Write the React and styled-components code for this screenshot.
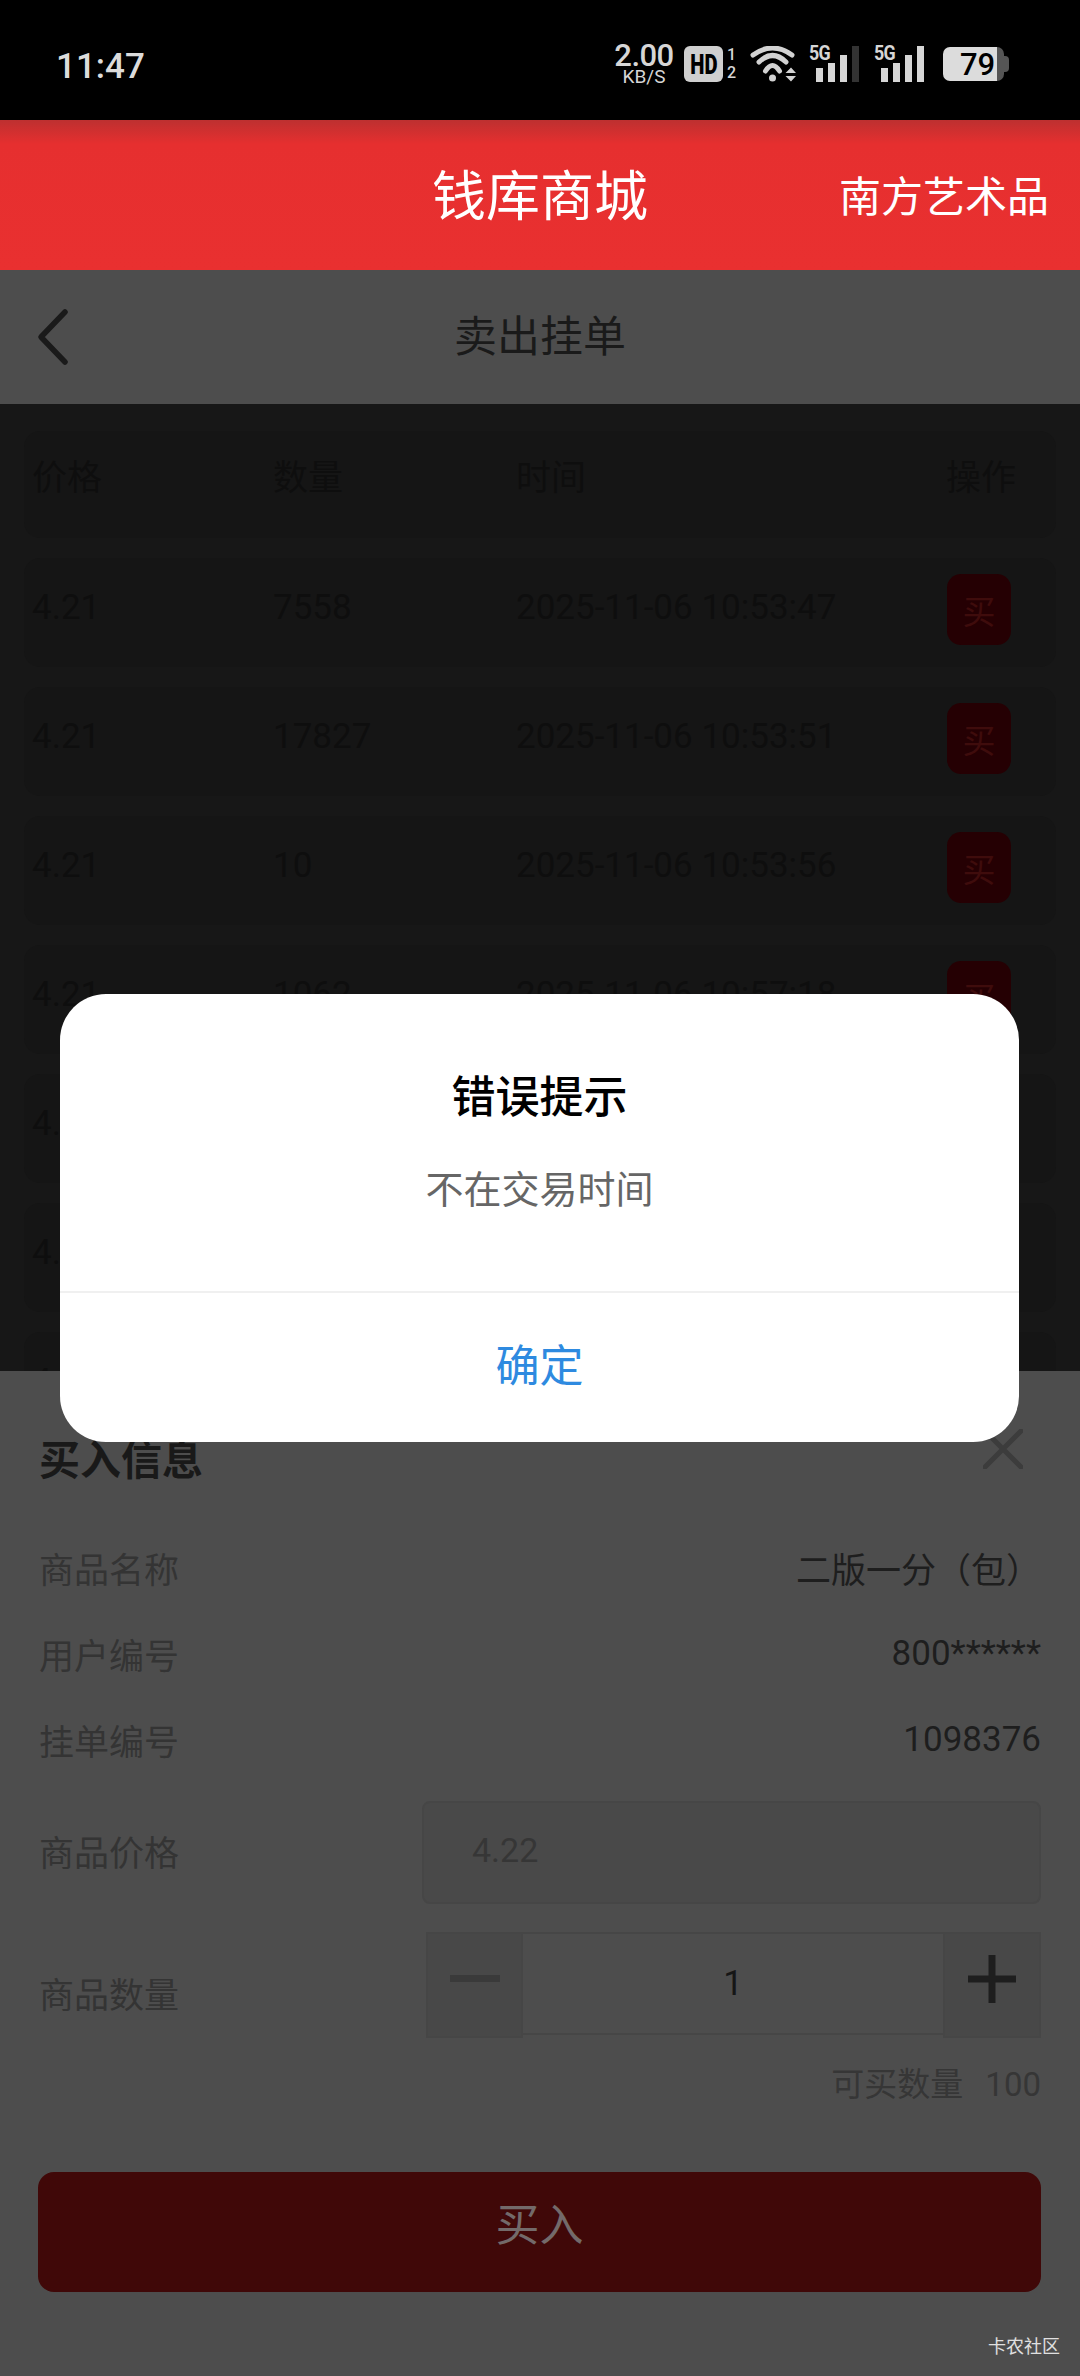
import React from "react";
import styled, { createGlobalStyle } from "styled-components";

const orders = [
  { price: "4.21", count: "7558", time: "2025-11-06 10:53:47" },
  { price: "4.21", count: "17827", time: "2025-11-06 10:53:51" },
  { price: "4.21", count: "10", time: "2025-11-06 10:53:56" },
  { price: "4.21", count: "1062", time: "2025-11-06 10:57:18" },
  { price: "4.21", count: "500", time: "2025-11-06 10:58:02" },
  { price: "4.21", count: "200", time: "2025-11-06 10:58:40" },
  { price: "4.21", count: "300", time: "2025-11-06 10:59:12" },
];

const infos = [
  { label: "商品名称", value: "二版一分（包）" },
  { label: "用户编号", value: "800******" },
  { label: "挂单编号", value: "1098376" },
];

const Signal = ({ last }) => (
  <SignalBox>
    <SignalLabel>5G</SignalLabel>
    <Bar $h={14} />
    <Bar $h={19} />
    <Bar $h={27} />
    <Bar $h={36} $dim={last} />
  </SignalBox>
);

const App = () => {
  return (
    <Page>
      <GlobalStyle />
      <StatusBar>
        <Clock>11:47</Clock>
        <StatusIcons>
          <NetSpeed>
            <b>2.00</b>
            <span>KB/S</span>
          </NetSpeed>
          <HdBadge>
            <span>HD</span>
          </HdBadge>
          <SimNumbers>
            <span>1</span>
            <span>2</span>
          </SimNumbers>
          <WifiIcon width="46" height="36" viewBox="0 0 46 36" fill="none">
            <path d="M3 9Q22.500-5 42 9" stroke="#d2d2d2" strokeWidth="5" strokeLinecap="round" />
            <path d="M9 16Q22.500 3 36 16" stroke="#d2d2d2" strokeWidth="5" strokeLinecap="round" />
            <path d="M15.500 25Q22.500 14 29.500 25" stroke="#d2d2d2" strokeWidth="5" strokeLinecap="round" />
            <circle cx="22.500" cy="32" r="3.500" fill="#d2d2d2" />
            <path d="M35.500 27L41 21.500L46 27ZM35.500 30L41 35.500L46 30Z" fill="#d2d2d2" />
          </WifiIcon>
          <Signal last />
          <Signal />
          <Battery>79</Battery>
        </StatusIcons>
      </StatusBar>

      <AppHeader>
        <span />
        <AppTitle>钱库商城</AppTitle>
        <ShopName>南方艺术品</ShopName>
      </AppHeader>

      <SubHeader>
        <BackIcon width="36" height="60" viewBox="0 0 36 60" fill="none">
          <path d="M31 5L7 30L31 55" stroke="#1a1a1a" strokeWidth="5.500" strokeLinecap="round" strokeLinejoin="round" />
        </BackIcon>
        <SubTitle>卖出挂单</SubTitle>
      </SubHeader>

      <OrderList>
        <HeadRow>
          <Cell>价格</Cell>
          <Cell>数量</Cell>
          <Cell>时间</Cell>
          <Cell>操作</Cell>
        </HeadRow>
        {orders.map((order) => (
          <OrderRow key={order.time}>
            <Cell>{order.price}</Cell>
            <Cell>{order.count}</Cell>
            <Cell>{order.time}</Cell>
            <SmallBuy>买</SmallBuy>
          </OrderRow>
        ))}
      </OrderList>

      <Sheet>
        <SheetHead>
          <SheetTitle>买入信息</SheetTitle>
          <CloseIcon width="40" height="40" viewBox="0 0 40 40" fill="none">
            <path d="M2 38L38 2M2 2L38 38" stroke="#3c3c3c" strokeWidth="5" strokeLinecap="round" />
          </CloseIcon>
        </SheetHead>

        <InfoList>
          {infos.map((info) => (
            <InfoRow key={info.label}>
              <Label>{info.label}</Label>
              <Value>{info.value}</Value>
            </InfoRow>
          ))}
        </InfoList>

        <PriceRow>
          <Label>商品价格</Label>
          <PriceInput>4.22</PriceInput>
        </PriceRow>

        <CountRow>
          <CountLabel>商品数量</CountLabel>
          <Stepper>
            <StepButton>
              <svg width="50" height="8" viewBox="0 0 50 8">
                <rect width="50" height="7" fill="#3a3a3a" />
              </svg>
            </StepButton>
            <StepValue>1</StepValue>
            <StepButton>
              <svg width="50" height="50" viewBox="0 0 50 50">
                <path d="M25 1V49M1 25H49" stroke="#1e1e1e" strokeWidth="7" />
              </svg>
            </StepButton>
          </Stepper>
        </CountRow>

        <Available>
          <span>可买数量</span>
          <span>100</span>
        </Available>

        <BuyButton>买入</BuyButton>
      </Sheet>

      <Dialog>
        <DialogBody>
          <DialogTitle>错误提示</DialogTitle>
          <DialogText>不在交易时间</DialogText>
        </DialogBody>
        <DialogAction>确定</DialogAction>
      </Dialog>

      <Watermark>卡农社区</Watermark>
    </Page>
  );
};

const GlobalStyle = createGlobalStyle`
  html, body {
    margin: 0;
    padding: 0;
    background: #000;
  }
  * {
    box-sizing: border-box;
  }
`;

const Page = styled.div`
  position: relative;
  display: flex;
  flex-direction: column;
  width: 1080px;
  height: 2376px;
  overflow: hidden;
  background: #171717;
  font-family: Roboto, "Noto Sans CJK SC", sans-serif;
`;

const StatusBar = styled.div`
  display: flex;
  align-items: center;
  justify-content: space-between;
  flex: none;
  height: 120px;
  padding: 16px 76px 8px 56px;
  background: #000;
  color: #d6d6d6;
`;

const Clock = styled.div`
  margin-top: 4px;
  font-size: 35px;
  font-weight: 500;
  color: #dcdcdc;
`;

const StatusIcons = styled.div`
  display: flex;
  align-items: center;
`;

const NetSpeed = styled.div`
  display: flex;
  flex-direction: column;
  align-items: center;
  width: 58px;
  font-size: 19px;
  line-height: 16px;

  b {
    font-size: 31px;
    font-weight: 500;
    line-height: 26px;
    letter-spacing: -0.5px;
  }
`;

const HdBadge = styled.div`
  display: flex;
  align-items: center;
  justify-content: center;
  width: 39px;
  height: 36px;
  margin-left: 11px;
  border-radius: 6px;
  background: #cfcfcf;
  color: #000;
  font-size: 28px;
  font-weight: 900;

  span {
    transform: scaleX(0.72);
  }
`;

const SimNumbers = styled.div`
  display: flex;
  flex-direction: column;
  align-items: center;
  width: 9px;
  margin-left: 4px;
  font-size: 16px;
  font-weight: 500;
  line-height: 18px;
`;

const WifiIcon = styled.svg`
  margin-left: 14px;
`;

const SignalBox = styled.div`
  position: relative;
  display: flex;
  align-items: flex-end;
  gap: 5px;
  width: 51px;
  height: 36px;
  margin-left: 14px;
  padding-left: 6px;
`;

const SignalLabel = styled.span`
  position: absolute;
  top: -5px;
  left: -1px;
  font-size: 21px;
  font-weight: 700;
  letter-spacing: -1px;
  color: #d6d6d6;
  transform: scaleX(0.85);
  transform-origin: left;
`;

const Bar = styled.i`
  display: block;
  width: 7px;
  height: ${(p) => p.$h}px;
  background: ${(p) => (p.$dim ? "#333" : "#d6d6d6")};
`;

const Battery = styled.div`
  position: relative;
  display: flex;
  align-items: center;
  justify-content: center;
  width: 61px;
  height: 34px;
  margin-left: 17px;
  padding-left: 8px;
  border-radius: 7px;
  background: linear-gradient(90deg, #dcdcdc 89%, #555 89%);
  color: #000;
  font-size: 31px;
  font-weight: 500;

  &::after {
    content: "";
    position: absolute;
    right: -5px;
    top: 9px;
    width: 5px;
    height: 16px;
    border-radius: 0 4px 4px 0;
    background: #555;
  }
`;

const AppHeader = styled.div`
  display: grid;
  grid-template-columns: 1fr auto 1fr;
  align-items: center;
  flex: none;
  height: 150px;
  background: linear-gradient(#bd3030, #e62f2f 16%, #e93030);
  color: #fff;
`;

const AppTitle = styled.div`
  margin-top: 6px;
  font-size: 54px;
  line-height: 70px;
`;

const ShopName = styled.div`
  justify-self: end;
  margin: 0 31px 4px 0;
  font-size: 42px;
`;

const SubHeader = styled.div`
  display: grid;
  grid-template-columns: 1fr auto 1fr;
  align-items: center;
  flex: none;
  height: 134px;
  background: #4d4d4d;
`;

const BackIcon = styled.svg`
  margin-left: 34px;
`;

const SubTitle = styled.div`
  margin-bottom: 9px;
  font-size: 43px;
  color: #1a1a1a;
`;

const OrderList = styled.div`
  display: flex;
  flex-direction: column;
  gap: 20px;
  padding: 27px 24px 0;
`;

const HeadRow = styled.div`
  display: grid;
  grid-template-columns: 241px 243px 430px 1fr;
  align-items: center;
  height: 107px;
  padding: 23px 0 30px 8px;
  border-radius: 16px;
  background: #151515;
`;

const OrderRow = styled(HeadRow)`
  flex: none;
  height: 109px;
  padding: 16px 0 22px 8px;
`;

const Cell = styled.div`
  padding-bottom: 4px;
  font-size: 35px;
  line-height: 50px;
  white-space: nowrap;
  color: #0e0e0e;
`;

const SmallBuy = styled.div`
  display: flex;
  align-items: center;
  justify-content: center;
  width: 64px;
  height: 71px;
  margin-left: 1px;
  border-radius: 14px;
  background: #250003;
  color: #3f0c0c;
  font-size: 33px;
`;

const Sheet = styled.div`
  position: absolute;
  left: 0;
  right: 0;
  bottom: 0;
  height: 1005px;
  padding: 63px 39px 0;
  background: #4d4d4d;
`;

const SheetHead = styled.div`
  display: flex;
  justify-content: space-between;
  align-items: flex-start;
  height: 54px;
`;

const SheetTitle = styled.div`
  font-size: 41px;
  font-weight: 700;
  line-height: 54px;
  color: #191919;
`;

const CloseIcon = styled.svg`
  margin: -5px 18px 0 0;
`;

const InfoList = styled.div`
  margin-top: 39px;
`;

const InfoRow = styled.div`
  display: flex;
  align-items: center;
  justify-content: space-between;
  height: 86px;
`;

const Label = styled.div`
  padding-bottom: 5px;
  font-size: 35px;
  color: #343434;
`;

const Value = styled.div`
  padding-bottom: 5px;
  font-size: 35px;
  color: #1e1e1e;
`;

const PriceRow = styled.div`
  display: flex;
  align-items: center;
  justify-content: space-between;
  margin-top: 16px;
`;

const PriceInput = styled.div`
  display: flex;
  align-items: center;
  width: 619px;
  height: 103px;
  padding: 0 0 5px 48px;
  border: 2px solid #464646;
  border-radius: 8px;
  background: #494949;
  color: #363636;
  font-size: 34px;
`;

const CountRow = styled(PriceRow)`
  margin-top: 28px;
`;

const CountLabel = styled(Label)`
  padding-top: 20px;
`;

const Stepper = styled.div`
  display: grid;
  grid-template-columns: 97px 1fr 98px;
  width: 615px;
  height: 106px;
`;

const StepButton = styled.div`
  display: flex;
  align-items: center;
  justify-content: center;
  padding-bottom: 12px;
  border: 2px solid #464646;
  background: #484848;
`;

const StepValue = styled.div`
  display: flex;
  align-items: center;
  justify-content: center;
  height: 103px;
  border-top: 2px solid #464646;
  border-bottom: 2px solid #464646;
  color: #161616;
  font-size: 35px;
`;

const Available = styled.div`
  display: flex;
  justify-content: flex-end;
  gap: 22px;
  margin-top: 27px;
  line-height: 40px;
  font-size: 33px;
  color: #363636;
`;

const BuyButton = styled.div`
  display: flex;
  align-items: center;
  justify-content: center;
  height: 120px;
  margin: 67px 0 0 -1px;
  padding-bottom: 20px;
  border-radius: 16px;
  background: #400808;
  color: #736a6a;
  font-size: 44px;
`;

const Dialog = styled.div`
  position: absolute;
  left: 60px;
  top: 994px;
  display: flex;
  flex-direction: column;
  width: 959px;
  height: 448px;
  border-radius: 46px;
  background: #fff;
`;

const DialogBody = styled.div`
  flex: none;
  height: 299px;
  padding-top: 74px;
  border-bottom: 2px solid #f0f0f0;
  text-align: center;
`;

const DialogTitle = styled.div`
  font-size: 44px;
  font-weight: 500;
  line-height: 60px;
  color: #000;
`;

const DialogText = styled.div`
  margin-top: 37px;
  font-size: 38px;
  line-height: 50px;
  color: #666;
`;

const DialogAction = styled.div`
  display: flex;
  align-items: center;
  justify-content: center;
  flex: 1;
  padding-bottom: 10px;
  font-size: 44px;
  color: #2e8ae0;
`;

const Watermark = styled.div`
  position: absolute;
  right: 20px;
  bottom: 15px;
  font-size: 18px;
  line-height: 28px;
  color: #e0e0e0;
`;

export default App;
